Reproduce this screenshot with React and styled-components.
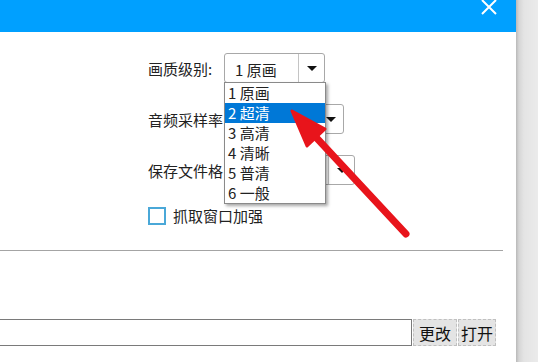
import React from 'react';
import styled, {createGlobalStyle} from 'styled-components';

const GlobalStyle = createGlobalStyle`
  html, body { margin: 0; padding: 0; background: #ffffff; }
  body { font-family: "Noto Sans CJK SC", "Noto Sans", sans-serif; overflow: hidden; }
`;

const Screen = styled.div`
  display: flex;
  width: 538px;
  height: 362px;
  position: relative;
  overflow: hidden;
`;

const Dialog = styled.div`
  width: 516px;
  display: flex;
  flex-direction: column;
  background: #ffffff;
`;

const Backdrop = styled.div`
  flex: 1;
  background: linear-gradient(to right, #b9b9b9 0px, #d6d6d6 3px, #e4e4e4 8px, #ebebeb 100%);
`;

const TitleBar = styled.div`
  height: 32px;
  background: #00a0ff;
  display: flex;
  justify-content: flex-end;
  align-items: flex-start;
  padding-right: 19px;
`;

const CloseIcon = styled.svg`
  width: 16px;
  height: 16px;
  margin-top: -1px;
`;

const Form = styled.div`
  display: grid;
  grid-template-columns: 76px auto;
  row-gap: 21px;
  align-items: center;
  padding: 21px 0 0 148px;
  justify-items: start;
`;

const Label = styled.div`
  font-size: 15px;
  color: #222;
  white-space: nowrap;
  overflow: hidden;
  width: 76px;
`;

const Combo = styled.div`
  position: relative;
  width: ${p => p.w}px;
  height: ${p => p.h}px;
  box-sizing: border-box;
  border: 1px solid #a8a8a8;
  border-radius: 3px;
  background: #fff;
  display: flex;
  align-items: center;
  font-size: 15px;
  color: #222;
`;

const ComboValue = styled.div`
  flex: 1;
  padding-left: 10px;
  padding-top: 3px;
`;

const ComboButton = styled.div`
  width: 25px;
  height: 100%;
  border-left: 1px solid #c4c4c4;
  display: flex;
  align-items: center;
  justify-content: center;
`;

const Caret = styled.div`
  width: 0;
  height: 0;
  border-left: 5px solid transparent;
  border-right: 5px solid transparent;
  border-top: 5px solid #111;
`;

const DropList = styled.ul`
  position: absolute;
  left: -1px;
  top: 28px;
  width: 100px;
  margin: 0;
  padding: 0;
  list-style: none;
  background: #fff;
  border: 1px solid #8a8a8a;
  box-shadow: 2px 2px 3px rgba(0, 0, 0, 0.35);
  z-index: 5;
`;

const DropItem = styled.li`
  height: 20px;
  line-height: 20px;
  padding-left: 3px;
  font-size: 15px;
  color: ${p => (p.active ? '#fff' : '#222')};
  background: ${p => (p.active ? '#0078d7' : 'transparent')};
`;

const CheckRow = styled.div`
  grid-column: 1 / span 2;
  display: flex;
  align-items: center;
  gap: 7px;
  font-size: 15px;
  color: #222;
  margin-top: -1px;
`;

const CheckBox = styled.div`
  width: 18px;
  height: 18px;
  box-sizing: border-box;
  border: 2px solid #4aa8d8;
  background: #fff;
`;

const Divider = styled.div`
  height: 1px;
  background: #a4a4a4;
  margin: 24px 13px 0 0;
`;

const PathRow = styled.div`
  display: flex;
  align-items: stretch;
  margin-top: 68px;
  height: 27px;
`;

const PathInput = styled.div`
  width: 412px;
  box-sizing: border-box;
  border: 1px solid #7a7a7a;
  border-left: none;
  background: #fff;
`;

const SmallButton = styled.div`
  width: ${p => p.w}px;
  box-sizing: border-box;
  margin-left: 1px;
  border: 1px dashed #c0c0c0;
  background: #e4e4e4;
  display: flex;
  align-items: center;
  justify-content: center;
  font-size: 16px;
  color: #111;
`;

const Arrow = styled.svg`
  position: absolute;
  left: 0;
  top: 0;
  pointer-events: none;
  z-index: 10;
`;

const qualities = ['1 原画', '2 超清', '3 高清', '4 清晰', '5 普清', '6 一般'];

export default function App() {
  return (
    <Screen>
      <GlobalStyle />
      <Dialog>
        <TitleBar>
          <CloseIcon viewBox="0 0 16 16">
            <path d="M1 1 L15 15 M15 1 L1 15" stroke="#fff" strokeWidth="2" fill="none" />
          </CloseIcon>
        </TitleBar>
        <Form>
          <Label>画质级别:</Label>
          <Combo w={101} h={30}>
            <ComboValue>1 原画</ComboValue>
            <ComboButton><Caret /></ComboButton>
            <DropList>
              {qualities.map((q, i) => (
                <DropItem key={q} active={i === 1}>{q}</DropItem>
              ))}
            </DropList>
          </Combo>
          <Label>音频采样率</Label>
          <Combo w={120} h={30}>
            <ComboValue />
            <ComboButton><Caret /></ComboButton>
          </Combo>
          <Label>保存文件格</Label>
          <Combo w={131} h={30}>
            <ComboValue />
            <ComboButton><Caret /></ComboButton>
          </Combo>
          <CheckRow>
            <CheckBox />
            抓取窗口加强
          </CheckRow>
        </Form>
        <Divider />
        <PathRow>
          <PathInput />
          <SmallButton w={44}>更改</SmallButton>
          <SmallButton w={38}>打开</SmallButton>
        </PathRow>
      </Dialog>
      <Backdrop />
      <Arrow width="538" height="362" viewBox="0 0 538 362">
        <line x1="406" y1="234" x2="312" y2="133" stroke="#e8141b" strokeWidth="7" strokeLinecap="round" />
        <polygon points="292,111 325,129 307,146" fill="#e8141b" stroke="#e8141b" strokeWidth="3" strokeLinejoin="round" />
      </Arrow>
    </Screen>
  );
}
